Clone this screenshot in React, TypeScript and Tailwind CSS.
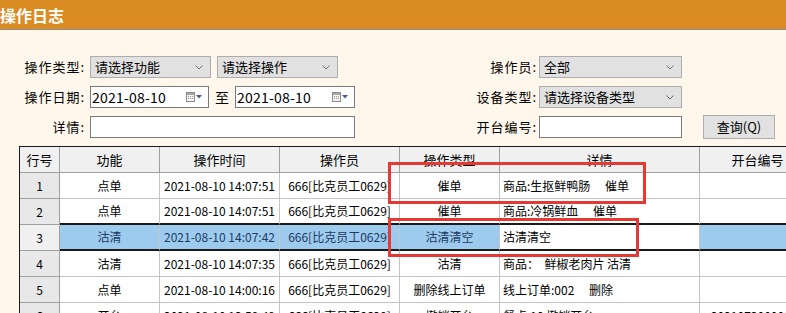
import React from "react";

type Row = {
  no: string;
  fn: string;
  time: string;
  op: string;
  type: string;
  detail: string;
  table: string;
};

const rows: Row[] = [
  { no: "1", fn: "点单", time: "2021-08-10 14:07:51", op: "666[比克员工0629]", type: "催单", detail: "商品:生抠鲜鸭肠\u3000 催单", table: "" },
  { no: "2", fn: "点单", time: "2021-08-10 14:07:51", op: "666[比克员工0629]", type: "催单", detail: "商品:冷锅鲜血\u3000 催单", table: "" },
  { no: "3", fn: "沽清", time: "2021-08-10 14:07:42", op: "666[比克员工0629]", type: "沽清清空", detail: "沽清清空", table: "" },
  { no: "4", fn: "沽清", time: "2021-08-10 14:07:35", op: "666[比克员工0629]", type: "沽清", detail: "商品：  鲜椒老肉片 沽清", table: "" },
  { no: "5", fn: "点单", time: "2021-08-10 14:00:16", op: "666[比克员工0629]", type: "删除线上订单", detail: "线上订单:002\u3000 删除", table: "" },
  { no: "6", fn: "开台", time: "2021-08-10 13:59:49", op: "666[比克员工0629]", type: "撤销开台", detail: "餐桌:10 撤销开台", table: "20210730000003" },
];

const colW = ["w-[40px]", "w-[100px]", "w-[120px]", "w-[120px]", "w-[100px]", "w-[200px]", "w-[116px]"];
const heads = ["行号", "功能", "操作时间", "操作员", "操作类型", "详情", "开台编号"];

function Chevron() {
  return (
    <svg width="8" height="5" viewBox="0 0 8 5">
      <path d="M0.5 0.5 L4 4 L7.5 0.5" fill="none" stroke="#707070" strokeWidth="1" />
    </svg>
  );
}

function Select({ label, w }: { label: string; w: string }) {
  return (
    <div className={`h-[22px] ${w} flex items-center justify-between bg-[#e1e1e1] border border-[#adadad] pl-[4px] pr-[7px] text-[13px]`}>
      <span>{label}</span>
      <Chevron />
    </div>
  );
}

function CalendarIcon() {
  return (
    <div className="flex items-center gap-[1px]">
      <svg width="9" height="10" viewBox="0 0 9 10">
        <rect x="0.5" y="0.5" width="8" height="9" fill="#f2f2f2" stroke="#8c8c8c" />
        <rect x="1" y="1" width="7" height="2" fill="#a8a8a8" />
        <rect x="2" y="4" width="1" height="1" fill="#9a9a9a" />
        <rect x="4" y="4" width="1" height="1" fill="#9a9a9a" />
        <rect x="6" y="4" width="1" height="1" fill="#9a9a9a" />
        <rect x="2" y="6" width="1" height="1" fill="#9a9a9a" />
        <rect x="4" y="6" width="1" height="1" fill="#9a9a9a" />
        <rect x="6" y="6" width="1" height="1" fill="#9a9a9a" />
      </svg>
      <svg width="6" height="4" viewBox="0 0 6 4">
        <path d="M0 0 H6 L3 3.5 Z" fill="#3d5f9e" />
      </svg>
    </div>
  );
}

function DateBox({ w }: { w: string }) {
  return (
    <div className={`h-[22px] ${w} flex items-center justify-between bg-white border border-[#7a7a7a] pl-[1px] pr-[6px] text-[14px]`}>
      <span className="tracking-[0.2px]">2021-08-10</span>
      <CalendarIcon />
    </div>
  );
}

function Label({ text }: { text: string }) {
  return <div className="h-[22px] flex items-center justify-end text-[13px] tracking-[1px]">{text}</div>;
}

export default function App() {
  return (
    <div className="relative w-[786px] h-[313px] overflow-hidden bg-[#fff7eb] text-black font-['Noto_Sans_CJK_SC',sans-serif]">
      {/* Title bar */}
      <div className="h-[30px] bg-[#da8b21] border-b border-[#8f8f8f] flex items-center">
        <span className="text-white text-[16px] font-bold leading-none">操作日志</span>
      </div>

      {/* Filters */}
      <div className="mt-[26px] grid grid-cols-[90px_265px_80px_104px_143px_1fr] grid-rows-[22px_22px_22px] gap-y-[8px]">
        <div className="pr-[5px]"><Label text="操作类型:" /></div>
        <div className="flex gap-[6px]">
          <Select label="请选择功能" w="w-[121px]" />
          <Select label="请选择操作" w="w-[121px]" />
        </div>
        <div />
        <div className="pr-[2px]"><Label text="操作员:" /></div>
        <Select label="全部" w="w-[143px]" />
        <div />

        <div className="pr-[5px]"><Label text="操作日期:" /></div>
        <div className="flex items-center">
          <DateBox w="w-[119px]" />
          <span className="w-[26px] text-center text-[14px]">至</span>
          <DateBox w="w-[120px]" />
        </div>
        <div />
        <div className="pr-[2px]"><Label text="设备类型:" /></div>
        <Select label="请选择设备类型" w="w-[143px]" />
        <div />

        <div className="pr-[5px]"><Label text="详情:" /></div>
        <div className="h-[22px] w-[265px] bg-white border border-[#7a7a7a]" />
        <div />
        <div className="pr-[2px]"><Label text="开台编号:" /></div>
        <div className="h-[22px] w-[143px] bg-white border border-[#7a7a7a]" />
        <div className="pl-[21px] flex items-center">
          <button className="h-[24px] w-[72px] bg-[#e1e1e1] border border-[#adadad] text-[13px] flex items-center justify-center">
            查询(Q)
          </button>
        </div>
      </div>

      {/* Grid */}
      <div className="mt-[8px] ml-[19px] w-[817px] border-t border-l border-[#1a1a1a] text-[12px]">
        <div className="flex">
          {heads.map((h, i) => (
            <div key={h} className={`${colW[i]} shrink-0 h-[26px] bg-[#f0f0f0] border-r border-b border-[#a0a0a0] flex items-center justify-center text-[13px]`}>
              {h}
            </div>
          ))}
        </div>
        {rows.map((r, ri) => {
          const sel = ri === 2;
          const thick = ri === 1 || ri === 2;
          const vals = [r.no, r.fn, r.time, r.op, r.type, r.detail, r.table];
          return (
            <div key={r.no} className="flex">
              {vals.map((v, ci) => {
                let cls = `${colW[ci]} shrink-0 h-[26px] flex items-center whitespace-pre border-r border-b`;
                if (ci === 0) {
                  cls += sel ? " bg-[#f0f0f0] border-[#a0a0a0] justify-center" : " bg-[#e8e8e8] border-[#a0a0a0] justify-center";
                } else {
                  cls += " border-[#c4c4c4]";
                  if (thick) cls += " border-b-2 border-b-[#1a1a1a]";
                  if (sel && ci !== 5) cls += " bg-[#9dcbee] text-[#1d3a62]";
                  else cls += " bg-white";
                  cls += ci === 5 ? " justify-start pl-[3px]" : " justify-center";
                }
                return (
                  <div key={ci} className={cls}>
                    {v}
                  </div>
                );
              })}
            </div>
          );
        })}
      </div>

      {/* Red annotation boxes */}
      <div className="absolute left-[388px] top-[162px] w-[258px] h-[42px] border-[3px] border-[#e53935]" />
      <div className="absolute left-[388px] top-[218px] w-[251px] h-[39px] border-[3px] border-[#e53935]" />
    </div>
  );
}
